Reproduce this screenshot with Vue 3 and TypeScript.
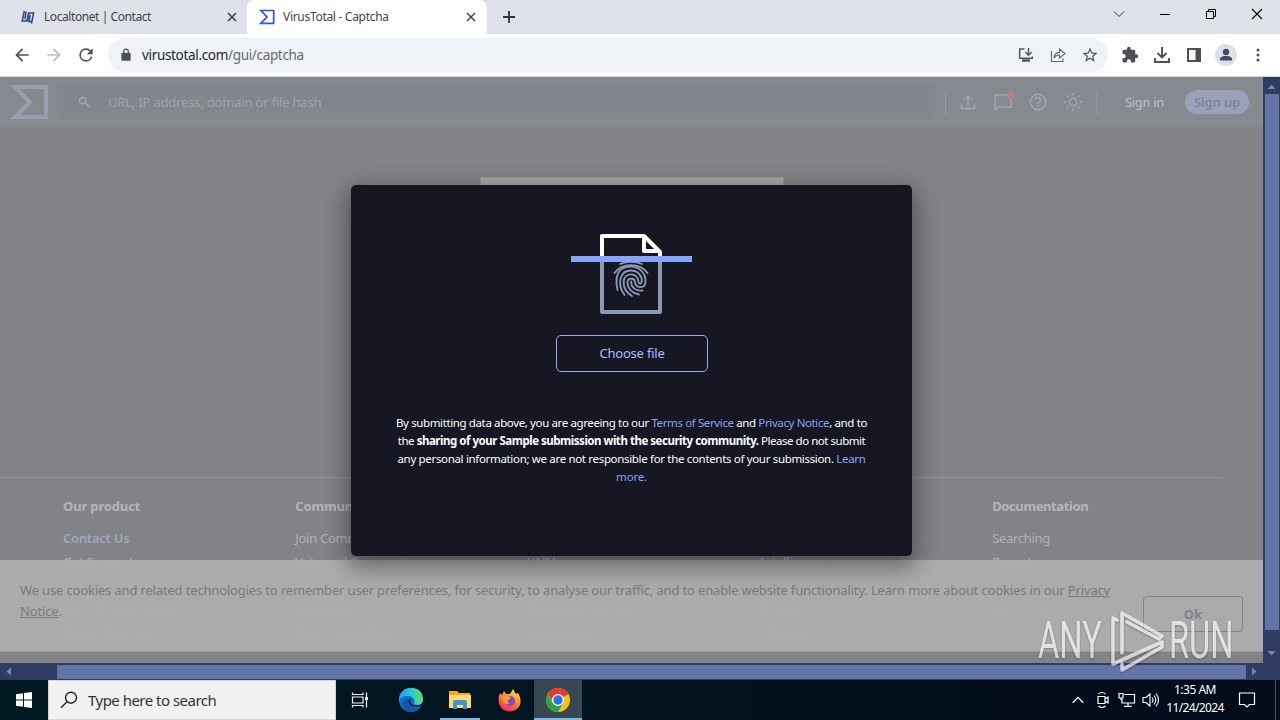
<script setup lang="ts">
interface FooterColumn {
  title: string
  links: string[]
}

const columns: FooterColumn[] = [
  { title: 'Our product', links: ['Contact Us', 'Get Support', '', 'ToS | Privacy Notice', 'Blog | Releases'] },
  { title: 'Community', links: ['Join Community', 'Vote and Comment', '', 'Top Users', 'Community Buzz'] },
  { title: 'Tools', links: ['API Scripts', 'YARA', '', 'Browser Extensions', 'Mobile App'] },
  { title: 'Premium Services', links: ['Get a demo', 'Intelligence', '', 'Graph', 'API v3 | v2'] },
  { title: 'Documentation', links: ['Searching', 'Reports', '', 'Use Cases', ''] },
]
const rays: number[] = [0, 45, 90, 135, 180, 225, 270, 315]
</script>

<template>
  <div class="screen">
    <div class="tabs">
      <div class="tab idle">
        <svg class="fav" width="16" height="18" viewBox="0 0 16 18" fill="none" stroke="#2d4684" stroke-width="1.500">
          <path d="M4.300 3L2.200 13H6.800L8.600 5H13.600L11.500 15.500M6.200 3.500L4.800 11M10.200 7L8.900 13.500H12M8.800 5L7.200 13" />
        </svg>
        <span class="t1">Localtonet | Contact</span>
        <svg class="close" width="10" height="10" viewBox="0 0 10 10" stroke="#43474c" stroke-width="1.700"><path d="M1 1L9 9M9 1L1 9" /></svg>
      </div>
      <div class="tab active">
        <svg class="fav" width="16" height="16" viewBox="0 0 16 16" fill="none" stroke="#3056d3" stroke-width="1.700"><path d="M1.800 1.500H14.700V14.300H1.800L8 8Z" /></svg>
        <span class="t2">VirusTotal - Captcha</span>
        <svg class="close" width="10" height="10" viewBox="0 0 10 10" stroke="#43474c" stroke-width="1.500"><path d="M1 1L9 9M9 1L1 9" /></svg>
      </div>
      <svg class="plus" width="14" height="14" viewBox="0 0 14 14" stroke="#2f3338" stroke-width="1.800"><path d="M7 1V13M1 7H13" /></svg>
      <div class="wincontrols">
        <svg width="12" height="12" viewBox="0 0 12 12" fill="none" stroke="#333"><path d="M1 3.500L6 8.500L11 3.500" /></svg>
        <svg width="12" height="12" viewBox="0 0 12 12" fill="none" stroke="#000"><path d="M1 6.500H11" /></svg>
        <svg width="12" height="12" viewBox="0 0 12 12" fill="none" stroke="#000"><path d="M1.500 3.500H8.500V10.500H1.500ZM3.500 3.500V1.500H10.500V8.500H8.500" /></svg>
        <svg width="12" height="12" viewBox="0 0 12 12" fill="none" stroke="#000" stroke-width="1.100"><path d="M1 1L11 11M11 1L1 11" /></svg>
      </div>
    </div>

    <div class="toolbar">
      <div class="nav">
        <svg width="20" height="20" viewBox="0 0 24 24" fill="#4d5156"><path d="M20 11H7.830l5.590-5.590L12 4l-8 8 8 8 1.410-1.410L7.830 13H20v-2z" /></svg>
        <svg width="20" height="20" viewBox="0 0 24 24" fill="#b9bcc0"><path d="M4 11h12.170l-5.590-5.590L12 4l8 8-8 8-1.410-1.410L16.170 13H4v-2z" /></svg>
        <svg width="20" height="20" viewBox="0 0 24 24" fill="#4d5156"><path d="M17.650 6.350A7.958 7.958 0 0 0 12 4a8 8 0 1 0 7.730 10h-2.080A6 6 0 1 1 12 6c1.660 0 3.140.690 4.220 1.780L13 11h7V4l-2.350 2.350z" /></svg>
      </div>
      <div class="omnibox">
        <svg width="14" height="14" viewBox="0 0 24 24" fill="#4d5156"><path d="M18 8h-1V6A5 5 0 0 0 7 6v2H6a2 2 0 0 0-2 2v10a2 2 0 0 0 2 2h12a2 2 0 0 0 2-2V10a2 2 0 0 0-2-2zM9 6a3 3 0 0 1 6 0v2H9V6z" /></svg>
        <span class="url"><b>virustotal.com</b>/gui/captcha</span>
        <div class="boxicons">
          <svg width="18" height="18" viewBox="0 0 18 18" fill="none" stroke="#55595e" stroke-width="1.500"><path d="M7.500 3H2.700V12.300H15.300V10.500M11.500 2V9M8.300 6L11.500 9.200L14.700 6" /><path d="M5 14.500H13" stroke-width="2.500" /></svg>
          <svg width="18" height="18" viewBox="0 0 18 18" fill="none" stroke="#66696e" stroke-width="1.200"><path d="M2.500 5V15.500H14V12.500M5 12C5.300 8.500 7.300 6.500 10.500 6.300V3L16 7.500L10.500 12V9C8 9 6.300 10 5 12Z" /></svg>
          <svg width="18" height="18" viewBox="0 0 24 24" fill="#4d5156"><path d="M22 9.240l-7.190-.620L12 2 9.190 8.630 2 9.240l5.460 4.730L5.820 21 12 17.270 18.180 21l-1.630-7.030L22 9.240zM12 15.400l-3.760 2.270 1-4.280-3.320-2.880 4.380-.380L12 6.100l1.710 4.040 4.380.380-3.320 2.880 1 4.280L12 15.400z" /></svg>
        </div>
      </div>
      <div class="actions">
        <svg width="18" height="18" viewBox="0 0 24 24" fill="#4d5156"><path d="M20.500 11H19V7a2 2 0 0 0-2-2h-4V3.500a2.500 2.500 0 0 0-5 0V5H4a2 2 0 0 0-2 2v3.800h1.500a2.700 2.700 0 0 1 0 5.400H2V20a2 2 0 0 0 2 2h3.800v-1.500a2.700 2.700 0 0 1 5.400 0V22H17a2 2 0 0 0 2-2v-4h1.500a2.500 2.500 0 0 0 0-5z" /></svg>
        <svg width="18" height="18" viewBox="0 0 18 18" fill="none" stroke="#4d5156" stroke-width="1.900"><path d="M9 1V11M4.500 7L9 11.500L13.500 7M2 12V16H16V12" /></svg>
        <svg width="18" height="18" viewBox="0 0 18 18" fill="#4d5156"><path d="M2 2H16V16H2ZM4 4V14H10.500V4Z" fill-rule="evenodd" /></svg>
        <svg width="22" height="22" viewBox="0 0 22 22"><circle cx="11" cy="11" r="11" fill="#dfe1e8" /><circle cx="11" cy="8" r="3.200" fill="#454b62" /><path d="M5 16.500V15C5 12.500 9 12 11 12S17 12.500 17 15V16.500Z" fill="#454b62" /></svg>
        <svg width="18" height="18" viewBox="0 0 18 18" fill="#4d5156"><circle cx="9" cy="4" r="1.500" /><circle cx="9" cy="9" r="1.500" /><circle cx="9" cy="14" r="1.500" /></svg>
      </div>
    </div>

    <div class="browser">
      <main class="page">
        <header class="vt">
          <svg class="logo" width="40" height="36" viewBox="0 0 40 36" fill="none" stroke="#999fae" stroke-width="4"><path d="M5 3H36V33H5L20 18Z" /></svg>
          <div class="searchbar">
            <svg width="12" height="12" viewBox="0 0 12 12" fill="none" stroke="#a7a9ad" stroke-width="1.300"><circle cx="4.700" cy="4.700" r="3.200" /><path d="M7 7L11 11" /></svg>
            <span>URL, IP address, domain or file hash</span>
          </div>
          <i class="sep"></i>
          <div class="vticons">
            <svg width="20" height="20" viewBox="0 0 20 20" fill="none" stroke="#a5a7aa" stroke-width="1.500"><path d="M10 14V4M6 7.700L10 3.700L14 7.700M3.500 13V16.500H16.500V13" /></svg>
            <svg width="24" height="22" viewBox="0 0 24 22" fill="none" stroke="#a5a7aa" stroke-width="1.400"><path d="M4 4H20V16H7.500L4 19Z" /><circle cx="20" cy="4" r="3.800" fill="#b38383" stroke="none" /></svg>
            <svg width="20" height="20" viewBox="0 0 20 20" fill="none" stroke="#a5a7aa" stroke-width="1.500"><circle cx="10" cy="10" r="7.700" /><path d="M7.500 8C7.500 4.700 12.500 4.800 12.500 7.800C12.500 9.500 10 9.600 10 12M10 13.300V15" /></svg>
            <svg width="20" height="20" viewBox="0 0 20 20" fill="none" stroke="#a5a7aa" stroke-width="1.500"><circle cx="10" cy="10" r="3.700" /><path v-for="a in rays" :key="a" d="M10 0.800V3.500" :transform="`rotate(${a} 10 10)`" /></svg>
          </div>
          <i class="sep"></i>
          <span class="signin">Sign in</span>
          <span class="signup">Sign up</span>
        </header>
        <div class="captcha"></div>
        <footer>
          <div v-for="c in columns" :key="c.title" class="col">
            <h4>{{ c.title }}</h4>
            <a v-for="(l, i) in c.links" :key="i">{{ l }}</a>
          </div>
        </footer>
        <div class="cookies">
          <i class="chat"></i>
          <p>We use cookies and related technologies to remember user preferences, for security, to analyse our traffic, and to enable website functionality. Learn more about cookies in our <u>Privacy<br>Notice</u>.</p>
          <button>Ok</button>
        </div>
        <section class="dialog">
          <svg class="scan" width="122" height="82" viewBox="0 0 122 82" fill="none">
            <path d="M32 26V3H74L90 19V26M74 3V18H90" stroke="#fff" stroke-width="4" stroke-linejoin="round" />
            <path d="M32 26V79H90V26" stroke="#8e99b5" stroke-width="4" stroke-linejoin="round" />
            <g stroke="#8e99b5" stroke-width="1.800" stroke-linecap="round">
              <path d="M50 31Q61 26.500 72 31" />
              <path d="M44.500 40C52 29.500 70 29.500 77.500 40" />
              <path d="M47.500 57C43 36 54 33.500 61 33.500C70 33.500 76 41 75.500 49C75 56 65.500 55.500 65 49C64.500 44.500 57.500 44.500 57.500 49.500C57.500 56 63 60.500 69 61.500" />
              <path d="M54.500 62C46 50 50.500 37.500 61 37.500C68 37.500 72 43 71.800 48C71.600 51.500 68.800 51.500 68.500 48.500C67.500 39 55 39 53.700 48C53 55 57 60 62 63" />
              <path d="M61.200 48.500C61 54 65 58.500 72.500 57.500" />
            </g>
            <path d="M1 23H122V29H1Z" fill="#85a5fa" />
          </svg>
          <button class="choose">Choose file</button>
          <div class="terms">
            <div class="l1">By submitting data above, you are agreeing to our <a>Terms of Service</a> and <a>Privacy Notice</a>, and to</div>
            <div class="l2">the <b>sharing of your Sample submission with the security community.</b> Please do not submit</div>
            <div class="l3">any personal information; we are not responsible for the contents of your submission. <a>Learn</a></div>
            <div class="l4"><a>more.</a></div>
          </div>
        </section>
      </main>
      <div class="vscroll">
        <svg width="9" height="5" viewBox="0 0 9 5" fill="#7489bd"><path d="M0.500 5L4.500 0.500L8.500 5Z" /></svg>
        <i></i>
        <svg width="9" height="5" viewBox="0 0 9 5" fill="#7489bd"><path d="M0.500 0L4.500 4.500L8.500 0Z" /></svg>
      </div>
      <div class="hscroll">
        <svg width="5" height="9" viewBox="0 0 5 9" fill="#7489bd"><path d="M5 0.500L0.500 4.500L5 8.500Z" /></svg>
        <i></i>
        <svg width="5" height="9" viewBox="0 0 5 9" fill="#7489bd"><path d="M0 0.500L4.500 4.500L0 8.500Z" /></svg>
      </div>
    </div>

    <div class="taskbar">
      <div class="start"><svg width="16" height="16" viewBox="0 0 16 16" fill="#fff"><path d="M0 2.200L7 1.200V7.500H0ZM8 1L16 0V7.500H8ZM0 8.500H7V14.800L0 13.800ZM8 8.500H16V16L8 15Z" /></svg></div>
      <div class="find">
        <svg width="18" height="18" viewBox="0 0 18 18" fill="none" stroke="#222" stroke-width="1.400"><circle cx="11" cy="6.700" r="5.500" /><path d="M7 10.800L1 16.800" /></svg>
        <span>Type here to search</span>
      </div>
      <div class="slot view">
        <svg width="18" height="18" viewBox="0 0 18 18" fill="none" stroke="#eef2f4" stroke-width="1.200"><path d="M1.500 1.500V3.500H12V1.500M1.500 6H12V12H1.500ZM1.500 16.500V14.500H12V16.500M15.500 1.500V16.500" /><path d="M14.200 6H17V9H14.200Z" fill="#fff" stroke="none" /></svg>
      </div>
      <div class="slot">
        <svg width="26" height="26" viewBox="0 0 26 26">
          <defs><linearGradient id="eg" x1="0" y1="0" x2="1" y2="0"><stop offset="0" stop-color="#229ee8" /><stop offset=".55" stop-color="#30c6d0" /><stop offset="1" stop-color="#65df5d" /></linearGradient></defs>
          <circle cx="13" cy="13" r="12" fill="#0b71cf" />
          <path d="M1 12C2-3 25-3 25 12C25 17 20 19 16 17C18 14 15 9 10 9C5 8.500 2 11 1 15Z" fill="url(#eg)" />
          <path d="M10 12C9 19 15 23 22 20.500C18 26 9 27 5 20C3.500 16 6 12 10 12Z" fill="#1853a5" />
          <path d="M13.500 11C11 14 13 18 17 18.500C21 19 24 17.500 25 15.500L24 18.500C18 21.500 10 20 10.500 13Z" fill="#03192a" />
        </svg>
      </div>
      <div class="slot run">
        <svg width="24" height="22" viewBox="0 0 24 22"><path d="M1 2H9L11 4H22V19H1Z" fill="#efab24" /><path d="M1 6H23V19H1Z" fill="#ffda6c" /><path d="M5 20V13Q5 11 7 11H17Q19 11 19 13V20H15V16H9V20Z" fill="#3998d5" /></svg>
      </div>
      <div class="slot">
        <svg width="24" height="24" viewBox="0 0 24 24">
          <defs><linearGradient id="fg" x1=".8" y1="0" x2=".3" y2="1"><stop offset="0" stop-color="#ffee42" /><stop offset=".45" stop-color="#ff8b25" /><stop offset="1" stop-color="#f92565" /></linearGradient></defs>
          <path d="M2 5L4 7L6 3L8 6L12 6L15 1L18 6L20 5C26 15 21 23 12 23.500C3 24-2 15 2 5Z" fill="url(#fg)" />
          <circle cx="12" cy="13" r="5" fill="#7848cf" /><path d="M4 9Q9 6 13 10L10 12Q8 14 12 15Q7 18 5 13Z" fill="#ff9f2c" />
        </svg>
      </div>
      <div class="slot run current">
        <svg width="26" height="26" viewBox="0 0 26 26"><circle cx="13" cy="13" r="12" fill="#fbc116" /><path d="M13 13L2.600 7A12 12 0 0 1 23.400 7Z" fill="#e33b2e" /><path d="M2.600 7A12 12 0 0 0 13 25L18.200 16L13 18.500L7.800 16Z" fill="#2da14c" /><path d="M13 7H23.400L20 4L7 4.500L3 7.600L8 15Z" fill="#e33b2e" /><circle cx="13" cy="13" r="6" fill="#fff" /><circle cx="13" cy="13" r="4.700" fill="#2b74e6" /></svg>
      </div>
      <div class="tray">
        <svg width="12" height="8" viewBox="0 0 12 8" fill="none" stroke="#fff" stroke-width="1.300"><path d="M0.700 6.700L6 1.400L11.300 6.700" /></svg>
        <svg width="14" height="18" viewBox="0 0 14 18" fill="none" stroke="#fff" stroke-width="1.200"><path d="M2 5.500H9V12.500H2ZM9 8L12 6V12L9 10M2.500 3Q6 0 9.500 3M2.500 15Q6 18 9.500 15" /></svg>
        <svg width="18" height="16" viewBox="0 0 18 16" fill="none" stroke="#fff" stroke-width="1.200"><path d="M6 2.500H16.500V11H4V7M10 11V14M6 14.300H13.500M1 1.500H5V6H1ZM3 6V8" /></svg>
        <svg width="18" height="16" viewBox="0 0 18 16" fill="none" stroke="#fff" stroke-width="1.100"><path d="M1 5.500H4L8 2V14L4 10.500H1ZM10 5.500Q12 8 10 10.500M12 3.500Q15.500 8 12 12.500M14 1.500Q19 8 14 14.500" /></svg>
      </div>
      <div class="clock"><span class="hour">1:35 AM</span><span class="date">11/24/2024</span></div>
      <svg class="note" width="18" height="18" viewBox="0 0 18 18" fill="none" stroke="#fff" stroke-width="1.200"><path d="M1.500 2H16.500V13.500H11.500L9 16L6.500 13.500H1.500Z" /></svg>
      <i class="peek"></i>
    </div>

    <div class="watermark">
      <span>ANY</span>
      <svg width="56" height="64" viewBox="0 0 56 64" fill="none" stroke="#fff" stroke-width="3.600" stroke-linejoin="round" stroke-linecap="round"><path d="M8 11L4 9V55L13 51L53 33M13 44V4L53 27L50 30L18 13M13 55V61L53 38V33" /></svg>
      <span>RUN</span>
    </div>
  </div>
</template>

<style>
html, body { overflow: hidden; }
</style>

<style scoped>
* { box-sizing: border-box; }
.screen { position: relative; width: 1280px; height: 720px; overflow: hidden; display: flex; flex-direction: column; font-family: "Noto Sans", "Open Sans", sans-serif; white-space: nowrap; background: #fff; }
svg { display: block; flex: none; }
.tabs { height: 34px; background: #dee1e7; display: flex; align-items: center; }
.tab { height: 34px; display: flex; align-items: center; font-size: 12px; color: #3f4348; }
.tab span { margin-left: 8px; position: relative; top: -0.500px; }
.tab .close { margin-left: auto; }
.idle { width: 247px; padding: 0 10px 0 20px; }
.active { width: 240px; background: #fff; border-radius: 8px 8px 0 0; padding: 0 11px 0 12px; }
.t1 { letter-spacing: -0.430px; }
.t2 { letter-spacing: -0.300px; }
.plus { margin-left: 15px; }
.wincontrols { margin: -6px 17px 0 auto; display: flex; gap: 34px; }
.toolbar { height: 43px; display: flex; align-items: center; border-bottom: 1px solid #d5d9dc; padding-left: 12px; }
.nav { display: flex; gap: 12px; }
.omnibox { margin-left: 12px; width: 1000px; height: 34px; border-radius: 17px; background: #f0f3f5; display: flex; align-items: center; padding: 0 9px 0 11px; }
.url { margin: -1px 0 0 9px; font-size: 13.500px; letter-spacing: -0.330px; color: #666a6f; }
.url b { font-weight: 400; color: #24272a; }
.boxicons { margin-left: auto; display: flex; gap: 14px; }
.actions { margin-left: 13px; display: flex; align-items: center; gap: 14px; }
.actions svg:nth-child(4) { margin: 0 -2px; }
.browser { height: 603px; display: grid; grid-template-columns: 1263px 17px; grid-template-rows: 586px 17px; background: #303d60; }
.page { position: relative; background: #838286; overflow: hidden; display: flex; flex-direction: column; }
.vt { height: 50px; flex: none; background: #858990; display: flex; align-items: center; border-bottom: 1px solid #89898e; color: #acadb0; font-size: 13px; }
.logo { margin-left: 10px; }
.searchbar { margin-left: 7px; width: 878px; height: 34px; background: #82868d; border-radius: 4px; display: flex; align-items: center; padding-left: 21px; color: #a0a2a6; }
.searchbar span { margin-left: 18px; letter-spacing: -0.190px; }
.sep { width: 1px; height: 24px; background: #95979c; }
.searchbar + .sep { margin-left: 10px; }
.vticons { display: flex; align-items: center; margin: 0 13px 0 12px; gap: 15px; }
.vticons svg:nth-child(2) { margin: 0 -2px 0 -2px; }
.signin { margin-left: 28px; width: 60px; color: #bfc0c4; letter-spacing: -0.350px; }
.signup { width: 64px; height: 24px; border-radius: 12px; background: #9aa1b8; color: #7f8597; font-weight: 600; line-height: 25px; text-align: center; letter-spacing: -0.150px; }
.captcha { position: absolute; left: 480px; top: 100px; width: 304px; height: 78px; background: #a6a6a7; border: 1px solid #989898; }
footer { margin-top: 350px; height: 186px; width: 1222px; border-top: 1px solid #929196; display: grid; grid-template-columns: repeat(5, 232.300px); padding: 18px 0 0 63px; flex: none; }
.col { display: flex; flex-direction: column; }
h4 { margin: 0 0 10px; font-size: 13px; line-height: 20px; font-weight: 700; color: #b6b6b8; letter-spacing: -0.150px; }
.col:last-child h4 { letter-spacing: -0.400px; }
.col a { font-size: 13px; line-height: 24px; min-height: 24px; color: #b2b2b4; letter-spacing: -0.300px; }
.col:first-child a:nth-of-type(1) { font-weight: 600; color: #a0a9bd; letter-spacing: -0.250px; }
.cookies { position: absolute; left: 0; top: 483px; width: 1263px; height: 92px; background: rgba(173, 173, 173, .96); border-bottom: 1px solid #9d9d9d; display: flex; padding: 20px; justify-content: space-between; align-items: flex-start; }
.cookies p { margin: 0; font-size: 13px; line-height: 21px; color: #7a7a7a; letter-spacing: -0.157px; }
.cookies button { position: relative; margin-top: 16px; width: 100px; height: 36px; border: 1px solid #838384; border-radius: 4px; background: transparent; color: #7f8086; font: 700 13px "Noto Sans", sans-serif; }
.chat { position: absolute; right: 26px; top: 18px; width: 60px; height: 60px; border-radius: 50%; background: #a7a9ae; opacity: .35; }
.dialog { position: absolute; left: 351px; top: 108px; width: 561px; height: 371px; background: #161722; border-radius: 5px; box-shadow: 0 8px 22px 4px rgba(0, 0, 0, .38); display: flex; flex-direction: column; align-items: center; }
.scan { margin: 48px 1px 0 0; }
.choose { margin: 20px 0 0 1px; width: 152px; height: 37px; padding-bottom: 3px; border: 1px solid #97abf0; border-radius: 5px; background: transparent; color: #a9bdff; font: 13px "Noto Sans", sans-serif; letter-spacing: -0.200px; }
.terms { margin-top: 42px; color: #fff; font-size: 11.500px; line-height: 18px; display: flex; flex-direction: column; align-items: center; }
.terms a { color: #8ba4f1; }
.l1 { letter-spacing: -0.380px; }
.l2 { letter-spacing: -0.480px; }
.l3 { letter-spacing: -0.330px; }
.l4 { letter-spacing: -0.200px; }
.vscroll { display: flex; flex-direction: column; align-items: center; padding: 7px 0; }
.vscroll i { width: 14px; height: 536px; margin: 5px 0 auto 0; background: #6375a7; }
.hscroll { display: flex; align-items: center; padding: 0 6px; }
.hscroll i { height: 14px; width: 1189px; margin: 0 auto 0 46px; background: #6375a7; }
.taskbar { height: 40px; background: linear-gradient(90deg, #021923 0, #02131f 52%, #020c1b 80%); display: flex; align-items: center; color: #fff; }
.start { width: 48px; display: flex; justify-content: center; }
.find { width: 288px; height: 40px; background: #f1f1f1; border: 1px solid #d3d4d5; display: flex; align-items: center; padding-left: 11px; color: #333; font-size: 15px; }
.find span { margin-left: 10px; letter-spacing: -0.520px; }
.slot { width: 49px; height: 40px; display: flex; align-items: center; justify-content: center; }
.view { width: 50px; padding-right: 2px; }
.run { box-shadow: inset 0 -2px #76b9ed; }
.run:not(.current) { width: 40px; margin: 0 5px 0 5px; }
.current { width: 48px; background: #374850; }
.tray { margin-left: auto; display: flex; align-items: center; gap: 9px; }
.tray svg:nth-child(1) { margin-right: 3px; }
.tray svg:nth-child(3) { margin-left: -1px; }
.tray svg:nth-child(4) { margin-left: -3px; }
.clock { margin: -2px 13px 0 5px; width: 60px; display: flex; flex-direction: column; align-items: center; font-size: 12px; line-height: 18px; }
.hour { letter-spacing: -0.500px; }
.date { letter-spacing: -0.650px; }
.note { margin-right: 19px; }
.peek { width: 1px; height: 40px; margin-right: 4px; background: #4b5563; }
.watermark { position: absolute; left: 1038px; top: 609px; height: 64px; display: flex; align-items: center; color: #fff; opacity: .65; filter: drop-shadow(0 1px 1px rgba(0, 0, 0, .4)); }
.watermark svg { margin: 0 4px 0 9px; }
.watermark span { width: 62px; font-family: Roboto, sans-serif; font-size: 51px; line-height: 64px; font-weight: 400; transform: scaleX(.64); transform-origin: 0 50%; }
</style>
